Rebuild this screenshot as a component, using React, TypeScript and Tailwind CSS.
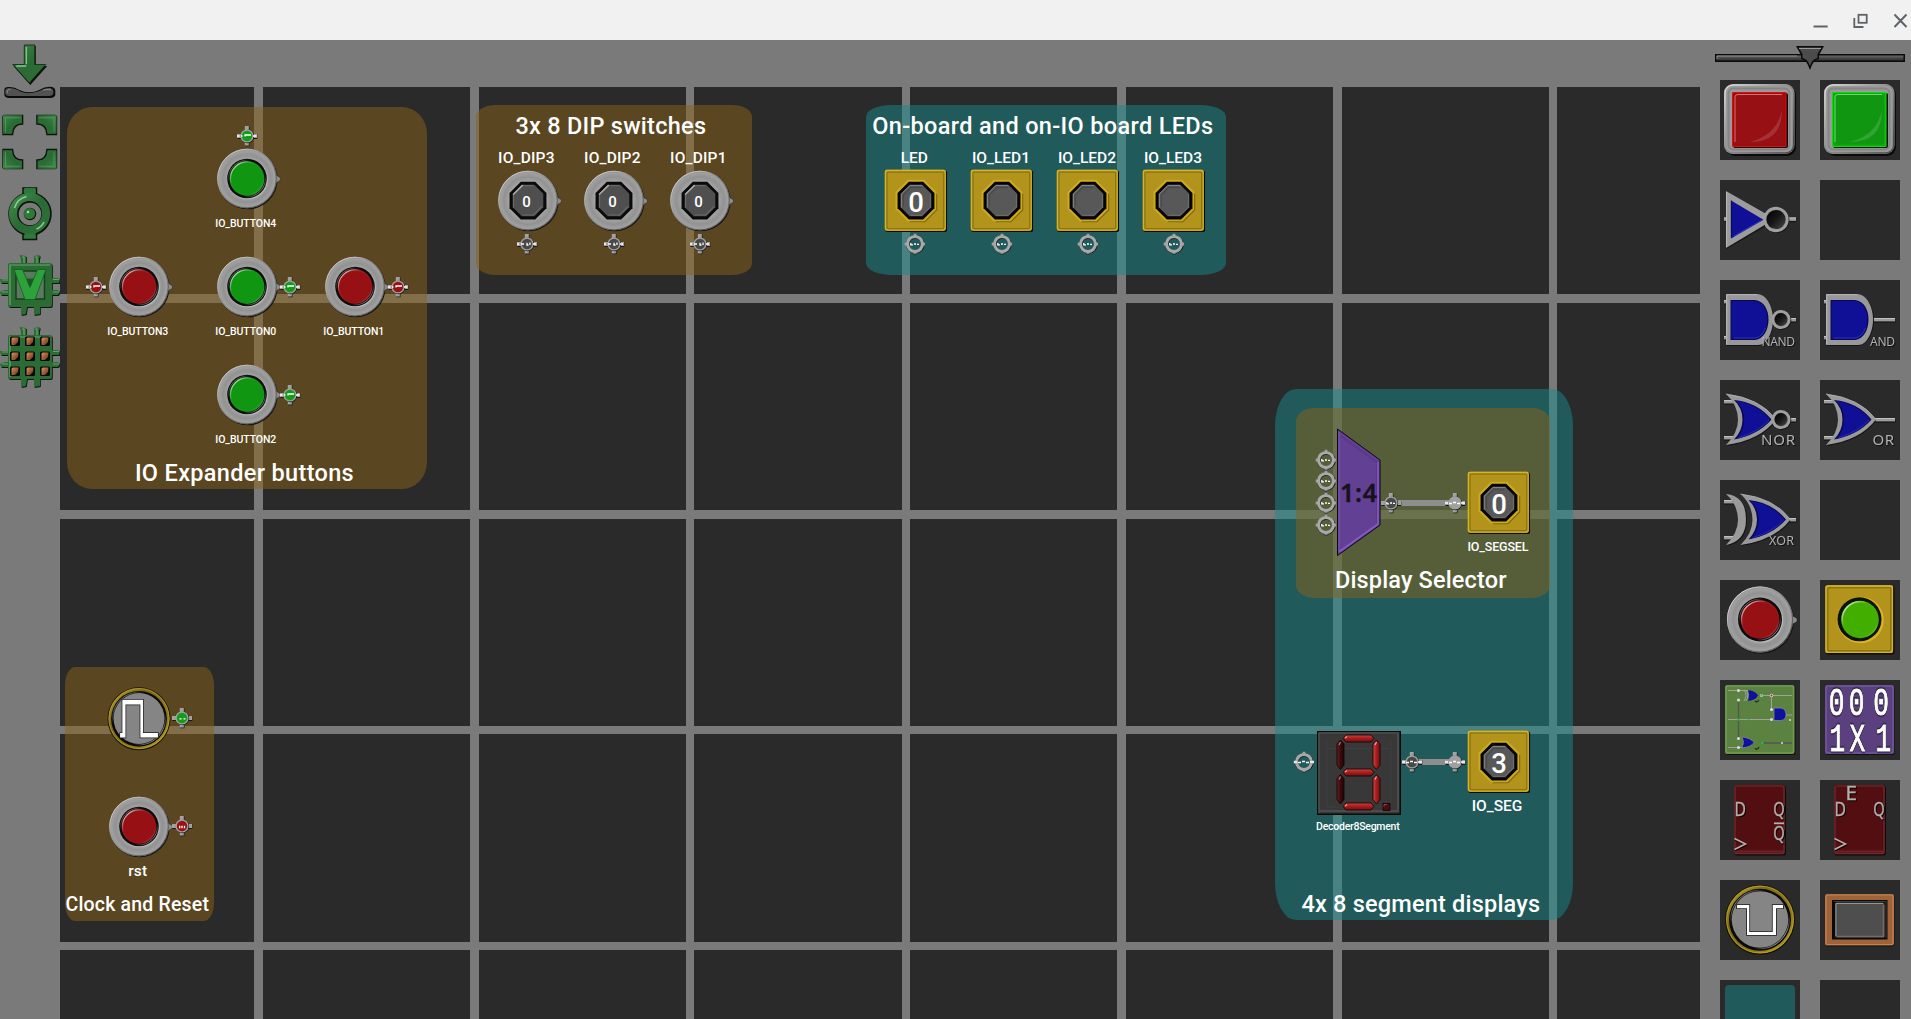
import React from "react";

/* ---------- Shared paint definitions ---------- */

function Defs() {
  return (
    <svg className="absolute h-0 w-0" aria-hidden="true">
      <defs>
        <radialGradient id="ring" cx="0.5" cy="0.5" r="0.5">
          <stop offset="0.6" stopColor="#a8a8a8" />
          <stop offset="0.8" stopColor="#929292" />
          <stop offset="0.93" stopColor="#a0a0a0" />
          <stop offset="1" stopColor="#8a8a8a" />
        </radialGradient>
        <linearGradient id="rim" x1="0" y1="0" x2="1" y2="1">
          <stop offset="0.1" stopColor="#e4e4e4" />
          <stop offset="0.45" stopColor="#8d8d8d" />
          <stop offset="0.9" stopColor="#3c3c3c" />
        </linearGradient>
        <linearGradient id="gloss" x1="0" y1="0" x2="1" y2="1">
          <stop offset="0.1" stopColor="#ffffff" stopOpacity="0.75" />
          <stop offset="0.35" stopColor="#ffffff" stopOpacity="0.05" />
          <stop offset="0.75" stopColor="#ffffff" stopOpacity="0" />
          <stop offset="1" stopColor="#ffffff" stopOpacity="0.3" />
        </linearGradient>
        <linearGradient id="glossEnd" x1="0" y1="0" x2="1" y2="1">
          <stop offset="0.1" stopColor="#ffffff" stopOpacity="0.7" />
          <stop offset="0.3" stopColor="#ffffff" stopOpacity="0" />
          <stop offset="0.7" stopColor="#ffffff" stopOpacity="0" />
          <stop offset="0.9" stopColor="#ffffff" stopOpacity="0.9" />
        </linearGradient>
        <linearGradient id="greenMetal" x1="0" y1="0" x2="1" y2="1">
          <stop offset="0" stopColor="#3f8a4a" />
          <stop offset="0.5" stopColor="#2a6a34" />
          <stop offset="1" stopColor="#2f7038" />
        </linearGradient>
        <linearGradient id="blackBall" x1="0" y1="0" x2="1" y2="1">
          <stop offset="0" stopColor="#000000" />
          <stop offset="0.5" stopColor="#181818" />
          <stop offset="1" stopColor="#4a4a4a" />
        </linearGradient>
        <linearGradient id="copper" x1="0" y1="0" x2="1" y2="1">
          <stop offset="0" stopColor="#d89468" />
          <stop offset="0.5" stopColor="#a05f36" />
          <stop offset="1" stopColor="#5a3018" />
        </linearGradient>
        <linearGradient id="slider" x1="0" y1="0" x2="0" y2="1">
          <stop offset="0" stopColor="#6c6c6c" />
          <stop offset="0.5" stopColor="#484848" />
          <stop offset="1" stopColor="#303030" />
        </linearGradient>
        <linearGradient id="redH" x1="0" y1="0" x2="0" y2="1">
          <stop offset="0" stopColor="#d04040" />
          <stop offset="0.5" stopColor="#a81c1c" />
          <stop offset="1" stopColor="#6e1010" />
        </linearGradient>
        <linearGradient id="redV" x1="0" y1="0" x2="1" y2="0">
          <stop offset="0" stopColor="#d44444" />
          <stop offset="0.5" stopColor="#a81c1c" />
          <stop offset="1" stopColor="#6e1010" />
        </linearGradient>
        <linearGradient id="offV" x1="0" y1="0" x2="1" y2="0">
          <stop offset="0" stopColor="#6e2024" />
          <stop offset="0.5" stopColor="#3a0a0c" />
          <stop offset="1" stopColor="#200506" />
        </linearGradient>
        <linearGradient id="gold" x1="0" y1="0" x2="1" y2="1">
          <stop offset="0" stopColor="#c8ac30" />
          <stop offset="0.3" stopColor="#7e6a14" />
          <stop offset="0.7" stopColor="#8e7818" />
          <stop offset="1" stopColor="#c4a428" />
        </linearGradient>
      </defs>
    </svg>
  );
}

const OCT = "M32 18.5H48L60.5 31V48L48 60.5H32L19.5 48V31Z";
const OCT_IN = "M33 22H47L57 32V47L47 57H33L23 47V32Z";

/* ---------- Component faces (80 x 80 artwork) ---------- */

function RoundBody() {
  return (
    <>
      <circle cx="40.8" cy="40.5" r="33.2" fill="#151515" />
      <path d="M71 35L77 38.500V41.500L71 45Z" fill="#8e8e8e" stroke="#222" strokeWidth="0.500" />
      <circle cx="40" cy="39.5" r="33" fill="url(#ring)" />
      <circle cx="40" cy="39.5" r="32.600" fill="none" stroke="url(#rim)" strokeWidth="1" />
    </>
  );
}

function PushButton({ color }: { color: string }) {
  return (
    <>
      <RoundBody />
      <circle cx="40.800" cy="40.300" r="22.300" fill="#bcbcbc" />
      <circle cx="40" cy="39.5" r="22" fill="#0c0c0c" />
      <circle cx="40" cy="39.5" r="20.4" fill="none" stroke="url(#glossEnd)" strokeWidth="0.7" />
      <circle cx="40" cy="39.5" r="19.300" fill={color} />
      <circle cx="40" cy="39.5" r="18.4" fill="none" stroke="url(#gloss)" strokeWidth="1.4" />
    </>
  );
}

function DipSwitch() {
  return (
    <>
      <RoundBody />
      <path d={OCT} fill="#0a0a0a" />
      <path d={OCT_IN} fill="#4f4f4f" />
      <path d="M23.5 33L34 22.5" stroke="#e8e8e8" strokeWidth="1.2" />
      <path d="M24 47V33L34 23H46" fill="none" stroke="#7a7a7a" strokeWidth="0.8" />
      <path d="M34 55.5H46L55.5 46" fill="none" stroke="#6a6a6a" strokeWidth="1.2" />
    </>
  );
}

function YellowPlate() {
  return (
    <>
      <rect x="6" y="6" width="68.500" height="68.500" rx="2" fill="#0d0d0d" />
      <rect x="5.300" y="5.300" width="67.800" height="67.800" rx="2" fill="#b2941c" />
      <rect x="6" y="6" width="66.400" height="66.400" rx="2" fill="none" stroke="#d8b42a" strokeWidth="1.3" />
      <rect x="7.800" y="7.800" width="63" height="63" rx="1.5" fill="none" stroke="#8f7512" strokeWidth="1.4" />
    </>
  );
}

function OctLed() {
  return (
    <>
      <YellowPlate />
      <path d={OCT} fill="none" stroke="#d9b21f" strokeWidth="4.5" opacity="0.75" />
      <path d="M33 63H50L63 50V32" fill="none" stroke="#82690c" strokeWidth="1.2" />
      <path d={OCT} fill="#050505" />
      <path d={OCT_IN} fill="#585858" />
      <path d="M23.7 47V32.3L33.3 22.7H47" fill="none" stroke="#8b8b8b" strokeWidth="1" />
      <path d="M26 46V33.5L34 25H46" fill="none" stroke="#4a4a4a" strokeWidth="1.4" />
      <path d="M34 56H46.5L56 46.5V33" fill="none" stroke="#727272" strokeWidth="1" />
    </>
  );
}

function RoundLed() {
  return (
    <>
      <YellowPlate />
      <circle cx="40.5" cy="40" r="23.3" fill="#dcb422" />
      <circle cx="39.5" cy="39.3" r="22" fill="#0d120a" />
      <circle cx="40" cy="39.5" r="18.8" fill="#42ae00" />
      <circle cx="40" cy="39.5" r="17.8" fill="none" stroke="url(#gloss)" strokeWidth="1.6" />
    </>
  );
}

function ClockFace({ wave }: { wave: string }) {
  return (
    <>
      <circle cx="40" cy="39.8" r="35" fill="#141204" />
      <circle cx="40" cy="39.5" r="34" fill="url(#gold)" />
      <circle cx="40" cy="39.5" r="33.4" fill="none" stroke="#c8ac30" strokeWidth="0.9" opacity="0.7" />
      <circle cx="40" cy="39.8" r="31" fill="#0a0a0a" />
      <circle cx="40" cy="39.5" r="29.3" fill="none" stroke="url(#glossEnd)" strokeWidth="0.9" />
      <circle cx="40" cy="39.5" r="28.3" fill="#858585" />
      <path d={wave} fill="#fff" stroke="#1c1c1c" strokeWidth="1.600" className="[paint-order:stroke]" />
    </>
  );
}

const WAVE_HIGH = "M19 55.500H21.500V18.500H44.500V55.500H61V60.500H41.500V24H25V60.500H19Z";
const WAVE_LOW = "M17 25H29.300V52H52.700V25H63V28.300H56V55H27V28.300H17Z";

function KeyCap({ face, light, dark }: { face: string; light: string; dark: string }) {
  return (
    <>
      <rect x="6" y="6" width="70" height="70" rx="9" fill="#0a0a0a" />
      <rect x="4" y="4" width="70.5" height="70" rx="9" fill="#9a9a9a" />
      <rect x="5" y="5" width="68.5" height="68" rx="8" fill="none" stroke="url(#rim)" strokeWidth="1.4" opacity="0.8" />
      <rect x="8.5" y="8.5" width="61" height="61" rx="5" fill="none" stroke="#858585" strokeWidth="2" />
      <rect x="13" y="13" width="55" height="55" rx="2" fill="#0c0c0c" />
      <rect x="12" y="12" width="54.5" height="55" rx="1" fill={light} />
      <rect x="13" y="13" width="52.5" height="53" rx="1" fill={dark} />
      <rect x="15.5" y="15" width="48.5" height="49.5" rx="2" fill={face} />
      <path d="M15 62V17Q15 14.5 18 14.5H62" fill="none" stroke="#fff" strokeWidth="0.9" opacity="0.5" />
      <path d="M62 30Q62 62 30 62Q57 55 62 30Z" fill="#fff" opacity="0.14" />
    </>
  );
}

/* ---------- Logic gates ---------- */

function Bubble({ x, r }: { x: number; r: number }) {
  return (
    <>
      <circle cx={x + 0.7} cy="40.3" r={r} fill="#151515" />
      <circle cx={x} cy="39.5" r={r} fill="#a0a0a0" />
      <circle cx={x} cy="39.5" r={r - 2.6} fill="#888" />
      <circle cx={x} cy="39.5" r={r - 3.1} fill="url(#blackBall)" />
    </>
  );
}

function Pin({ x, y, w }: { x: number; y: number; w: number }) {
  return (
    <>
      <rect x={x} y={y + 1} width={w + 0.4} height="3.6" fill="#151515" />
      <rect x={x} y={y} width={w} height="3.4" fill="#9c9c9c" />
      <rect x={x} y={y} width={w} height="1" fill="#c0c0c0" />
    </>
  );
}

function GateText({ children, x, w, size, y }: { children: string; x: number; w: number; size: number; y: number }) {
  return (
    <text
      x={x}
      y={y}
      fontSize={size}
      textLength={w}
      fill="#b0b0b0"
      fontFamily="Noto Sans, sans-serif"
      className="[filter:drop-shadow(1px_1px_0_#101010)]"
    >
      {children}
    </text>
  );
}

function NotGate() {
  return (
    <>
      <Pin x={4} y={37.5} w={4} />
      <Pin x={68} y={37.5} w={8} />
      <path d="M6.5 12V69L48 45V36Z" fill="#151515" />
      <path d="M6 11V68L48 43V35Z" fill="#9c9c9c" />
      <path d="M6.5 12V67" stroke="#b8b8b8" strokeWidth="1" />
      <path d="M11 20.5V58.5L43.5 39.7Z" fill="#101096" />
      <path d="M11.3 20.5V58" stroke="#06063c" strokeWidth="0.8" />
      <path d="M14 56L42 40" stroke="#3038c0" strokeWidth="1" />
      <Bubble x={56} r={12.7} />
    </>
  );
}

function AndBody() {
  return (
    <>
      <Pin x={4} y={20} w={4} />
      <Pin x={4} y={56} w={4} />
      <path d="M6.5 14.8H37C48 15.5 54 28 54 40C54 52 48 65 38 66H6.5Z" fill="#151515" />
      <path d="M6 14H37C47.500 14.500 53 28 53 39.500C53 51 47.500 65 38 65H6Z" fill="#989898" />
      <path d="M6.700 64V14.700H37" fill="none" stroke="#b8b8b8" strokeWidth="1" />
      <path d="M10.500 20H35C44 21 48.500 30 48.500 39.500C48.500 49 44 59 35 60H10.500Z" fill="#08084c" />
      <path d="M11.500 21H35C43 22 47.300 30 47.300 39.500C47.300 49 43 58.500 35 59H11.500Z" fill="#101096" />
      <path d="M14 58H35Q42 57 45.500 48" fill="none" stroke="#2830b4" strokeWidth="1" />
    </>
  );
}

function OrBody({ dx = 0 }: { dx?: number }) {
  return (
    <g transform={`translate(${dx} 0)`}>
      <path d="M7 15Q41 19 56 41Q41 61 7 66Q19 54 19 41Q19 26 7 15Z" fill="#151515" />
      <path d="M6 14Q40 18 56 39.500Q40 60.500 6 65Q18 53 18 40Q18 25 6 14Z" fill="#9a9a9a" />
      <path d="M6 14Q40 18 56 39.500" fill="none" stroke="#b4b4b4" strokeWidth="0.8" />
      <path d="M14 20Q37 22 51.500 39.500Q38 55 14 59.500Q22.500 51 22.500 39.500Q22.500 28 14 20Z" fill="#08084c" />
      <path d="M16 21Q37 23.500 50 39.500Q38 54 16.500 58.500Q24 51 24 39.500Q24 28 16 21Z" fill="#101096" />
      <path d="M19 57.500Q38 52 49 40" fill="none" stroke="#2830b4" strokeWidth="0.9" />
    </g>
  );
}

function OrPins() {
  return (
    <>
      <Pin x={4} y={20} w={11} />
      <Pin x={4} y={56} w={11} />
    </>
  );
}

function XorTail() {
  return (
    <>
      <path d="M7 15Q27 17 27 40Q27 62 7 66Q19 54 19 41Q19 26 7 15Z" fill="#151515" />
      <path d="M6 14Q26 16 26 39.500Q26 61 6 65Q18 53 18 40Q18 25 6 14Z" fill="#9a9a9a" />
    </>
  );
}

/* ---------- Palette tiles ---------- */

function MiniCircuit() {
  return (
    <>
      <rect x="6" y="6" width="69.500" height="69" rx="2" fill="#101010" />
      <rect x="5" y="5" width="69.500" height="69" rx="2" fill="#5b8240" />
      <rect x="6" y="6" width="67.500" height="67" rx="2" fill="none" stroke="#76a050" strokeWidth="1.500" opacity="0.8" />
      <path d="M8 10.500H28M42 15.500H72M8 39.500H52M8 67.500H26M51.500 15V30M66 35H72" stroke="#a0a0a0" strokeWidth="1" fill="none" />
      <path d="M18.500 20V59M40 63H72" stroke="#555" strokeWidth="1.300" />
      <path d="M28 10Q36 11 38 15.500Q36 20 28 21Q30 15 28 10Z" fill="#1010a0" />
      <path d="M24 10Q28 15 24 21M26 10Q30 15 26 21" stroke="#aaa" strokeWidth="0.900" fill="none" />
      <path d="M54 28H61Q66 29 66 34.500Q66 40 61 40.500H54Z" fill="#1010a0" stroke="#888" strokeWidth="0.800" />
      <path d="M22 57Q31 58 34 62.500Q31 67 22 68Q25 62 22 57Z" fill="#1010a0" stroke="#888" strokeWidth="0.700" />
      <g fill="#ddd">
        <circle cx="18.500" cy="10.500" r="1.500" /><circle cx="18.500" cy="20" r="1.500" />
        <circle cx="18.500" cy="58.500" r="1.500" /><circle cx="18.500" cy="67.500" r="1.500" />
        <circle cx="51.500" cy="29.500" r="1.500" /><circle cx="51.500" cy="39.500" r="1.500" />
        <circle cx="51.500" cy="15.500" r="1.800" /><circle cx="41.500" cy="15.500" r="1.500" />
        <circle cx="70" cy="40" r="1" /><circle cx="62" cy="63" r="1" />
      </g>
      <circle cx="51.500" cy="15.500" r="1" fill="#a02020" />
      <g fill="#20c030">
        <circle cx="18.500" cy="39.500" r="1.300" /><circle cx="28.500" cy="39.500" r="0.900" />
        <circle cx="41.500" cy="15.500" r="1" /><circle cx="42" cy="63" r="1.600" />
      </g>
      <path d="M35 21Q37 23 39 20M35 68Q37 71 39 67" stroke="#1c2a14" strokeWidth="1.200" fill="none" />
    </>
  );
}

const LUT_CHARS: [string, number, number][] = [
  ["0", 16.7, 35.3], ["0", 36.7, 35.3], ["0", 61, 35.3],
  ["1", 17.3, 71], ["X", 37.3, 71], ["1", 63.3, 71],
];

function LookupTable() {
  return (
    <>
      <rect x="6" y="6" width="68.500" height="69" rx="2" fill="#101010" />
      <rect x="5" y="5" width="69" height="69" rx="2" fill="#5b4080" />
      <rect x="6" y="6" width="67" height="67" rx="2" fill="none" stroke="#7a5ca4" strokeWidth="1.500" opacity="0.8" />
      {LUT_CHARS.map(([c, x, y], i) => (
        <text
          key={i}
          transform={`translate(${x} ${y}) scale(0.68 1)`}
          textAnchor="middle"
          fontFamily="Liberation Mono, monospace"
          fontSize="38.500"
          fill="#fff"
          stroke="#fff"
          strokeWidth="1"
          className="[filter:drop-shadow(0_0_1px_#000)_drop-shadow(0_0_0.5px_#000)]"
        >
          {c}
        </text>
      ))}
    </>
  );
}

function FlipText({ c, x, y }: { c: string; x: number; y: number }) {
  return (
    <text
      x={x}
      y={y}
      fontSize="19.500"
      fontFamily="Noto Sans, sans-serif"
      textLength="11.500"
      lengthAdjust="spacingAndGlyphs"
      fill="#b4b0b0"
      stroke="#b4b0b0"
      strokeWidth="0.300"
      className="[filter:drop-shadow(1px_1px_0_#0c0202)]"
    >
      {c}
    </text>
  );
}

function FlipFlop({ enable }: { enable?: boolean }) {
  return (
    <>
      <rect x="14.500" y="6" width="51.500" height="69.500" rx="2" fill="#0c0c0c" />
      <rect x="14" y="5" width="51" height="69.500" rx="2" fill="#520e10" />
      <rect x="15" y="6" width="49" height="67.500" rx="2" fill="none" stroke="#7c3434" strokeWidth="1.200" opacity="0.8" />
      <path d="M16 71.500H63" stroke="#7c3434" strokeWidth="2" opacity="0.6" />
      <FlipText c="D" x={14.5} y={36.3} />
      <FlipText c="Q" x={53.3} y={35.8} />
      {enable ? (
        <FlipText c="E" x={25.5} y={20} />
      ) : (
        <>
          <path d="M54 43.300H64" stroke="#b4b0b0" strokeWidth="1.800" />
          <FlipText c="Q" x={53.3} y={60} />
        </>
      )}
      <path d="M15 59.500L26 65L15 70.500" fill="none" stroke="#0c0202" strokeWidth="1.800" />
      <path d="M14.500 58.500L25.500 64L14.500 69.500" fill="none" stroke="#b4b0b0" strokeWidth="1.600" />
    </>
  );
}

function Screen() {
  return (
    <>
      <rect x="6" y="15" width="68.500" height="51.500" rx="2" fill="#101010" />
      <rect x="5" y="14" width="69" height="51.500" rx="2" fill="#a06338" />
      <rect x="6" y="15" width="67" height="49.500" rx="1.500" fill="none" stroke="#cc8a5c" strokeWidth="1.200" opacity="0.8" />
      <rect x="12" y="20" width="55.500" height="39.500" fill="#0a0a0a" />
      <path d="M14 21.500H66V58" fill="none" stroke="#555" strokeWidth="0.700" />
      <rect x="15" y="22.500" width="49.500" height="35" rx="1.500" fill="#4e4e4e" />
      <path d="M16 56V23.500H63" fill="none" stroke="#9a9a9a" strokeWidth="0.900" />
      <path d="M17 56.500H63.500V25" fill="none" stroke="#6e6e6e" strokeWidth="1.600" />
    </>
  );
}

function Tile({ children }: { children?: React.ReactNode }) {
  return (
    <div className="size-20 shrink-0 bg-[#2a2a2a]">
      <svg viewBox="0 0 80 80" className="block size-full">{children}</svg>
    </div>
  );
}

function Palette() {
  return (
    <aside className="flex w-[211px] shrink-0 flex-col overflow-hidden bg-[#7a7a7a] pl-[15px]">
      <svg viewBox="0 0 190 40" className="block h-10 w-[190px] shrink-0">
        <rect x="0" y="14" width="190" height="8" fill="#0a0a0a" />
        <rect x="1.500" y="15.500" width="187" height="5" fill="url(#slider)" />
        <path d="M2 19V16H82" stroke="#9a9a9a" strokeWidth="0.800" fill="none" />
        <path d="M81 6H109L104 15V19C98 21 98 23 95 30C92 23 92 21 86 19V15Z" fill="#0a0a0a" />
        <path d="M83.500 7.500H106.500L102.500 14V18C97 20 97 22 95 26C93 22 93 20 87.500 18V14Z" fill="#4c4c4c" />
        <path d="M84 8.500H106" stroke="#9a9a9a" strokeWidth="1" />
      </svg>
      <div className="grid grid-cols-[80px_80px] gap-5 pl-[5px]">
        <Tile><KeyCap face="#961014" light="#d01414" dark="#a80808" /></Tile>
        <Tile><KeyCap face="#109610" light="#12d812" dark="#05b005" /></Tile>
        <Tile><NotGate /></Tile>
        <Tile />
        <Tile><AndBody /><Pin x={69} y={38} w={7} /><Bubble x={61} r={9.6} /><GateText x={41.5} w={33.5} size={12} y={65.5}>NAND</GateText></Tile>
        <Tile><Pin x={53} y={38} w={22} /><AndBody /><GateText x={50} w={25} size={12} y={65.5}>AND</GateText></Tile>
        <Tile><OrPins /><OrBody /><Pin x={69} y={38} w={7} /><Bubble x={61} r={9.6} /><GateText x={41} w={34} size={15} y={65}>NOR</GateText></Tile>
        <Tile><OrPins /><Pin x={53} y={38} w={22} /><OrBody /><GateText x={52.5} w={21.5} size={15} y={65}>OR</GateText></Tile>
        <Tile><OrPins /><XorTail /><Pin x={68} y={38} w={8} /><OrBody dx={14.5} /><GateText x={49} w={25} size={12.5} y={65}>XOR</GateText></Tile>
        <Tile />
        <Tile><PushButton color="#961014" /></Tile>
        <Tile><RoundLed /></Tile>
        <Tile><MiniCircuit /></Tile>
        <Tile><LookupTable /></Tile>
        <Tile><FlipFlop /></Tile>
        <Tile><FlipFlop enable /></Tile>
        <Tile><ClockFace wave={WAVE_LOW} /></Tile>
        <Tile><Screen /></Tile>
        <Tile><rect x="5" y="5" width="70" height="70" rx="4" fill="#205a5a" /></Tile>
        <Tile />
      </div>
    </aside>
  );
}

/* ---------- Left toolbar ---------- */

const CHIP =
  "M8 17Q8 15 10 15H21V11L19.500 7L26 8V15H34V8L39 7L40 8L39 11V15H50Q52 15 52 17V30H58L60 31L59 35H52V42H58L60 44L58 47H52V57Q52 59 50 59H40V66L34 67V59H27L26 66L21 67V59H10Q8 59 8 57V47H1L0 44L5 42H8V35H1L0 31H8Z";

function ChipBase() {
  return (
    <>
      <path d={CHIP} transform="translate(0.800 1)" fill="#0c160c" />
      <path d={CHIP} fill="#2b6c35" />
      <path d="M10 57V17H50M22 9L24 9V15M35 9L37 9V15M2 32H8M2 44H8M53 31.500H59M53 44H59" stroke="#74b67c" strokeWidth="1.200" fill="none" opacity="0.8" />
    </>
  );
}

function ToolIcons() {
  return (
    <nav className="flex w-[60px] shrink-0 flex-col bg-[#7a7a7a]">
      <svg viewBox="0.700 0 60 60" className="block h-[60px] w-[60px]">
        <path d="M26 6H36.500V26H48L31 45L14 26H26Z" fill="#0c140c" />
        <path d="M25 5H35.500V24.500H46.500L30 43L13.500 24.500H25Z" fill="url(#greenMetal)" stroke="#10240f" strokeWidth="0.800" />
        <path d="M27 24V7M17 26H27" stroke="#86c88c" strokeWidth="1.300" />
        <path d="M5 50Q5 47 9 47Q15 46.500 20 50Q30 54.500 40 50Q46 46 53 47Q56 48 56 51V55Q55 58 51 58H10Q5 58 5 54Z" fill="#0a0a0a" />
        <path d="M6 51Q6 48 10 48Q16 48 21 51.500Q30 55 40 51Q46 47.500 51 48Q54 49 54 51V54Q53 56 50 56H10Q6 56 6 53Z" fill="#525252" />
        <path d="M8 53Q7 49.500 11 49.500M44 50Q50 48.500 52 50" stroke="#909090" strokeWidth="1" fill="none" />
      </svg>
      <svg viewBox="0.500 -0.300 60 72" className="block h-[72px] w-[60px]">
        {["", "translate(60.500 0) scale(-1 1)", "translate(0 83.500) scale(1 -1)", "translate(60.500 83.500) scale(-1 -1)"].map((t) => (
          <g key={t} transform={t}>
            <path d="M3.500 33.500V16Q4 15 5 15H22.500V23Q13 23 12.500 33.500Z" transform="translate(0.300 0.500)" stroke="#0c140c" strokeWidth="2" fill="none" />
            <path d="M3.500 33.500V16Q4 15 5 15H22.500V23Q13 23 12.500 33.500Z" fill="url(#greenMetal)" />
            <path d="M6 32V17.500H21" stroke="#5fa868" strokeWidth="1" fill="none" opacity="0.6" />
          </g>
        ))}
      </svg>
      <svg viewBox="0.500 0 60 72" className="block h-[72px] w-[60px]">
        <g stroke="#0c140c" strokeWidth="1.500">
          <path d="M23.500 16H37V23H23.500ZM23.500 60H37V67.500H23.500Z" fill="#2f7a3a" />
          <circle cx="30.500" cy="42" r="16.500" fill="none" strokeWidth="10.500" />
          <path d="M25 16H36V24H25ZM25 60H36V66H25Z" fill="#2f7a3a" stroke="none" />
          <circle cx="30" cy="41.500" r="16.500" fill="none" stroke="url(#greenMetal)" strokeWidth="8.200" />
        </g>
        <path d="M15 36A16.500 16.500 0 0 1 27 24.500M37 57Q42 55 44.500 50" stroke="#8ccc92" strokeWidth="1.600" fill="none" />
        <circle cx="30.500" cy="42" r="6.200" fill="#0c140c" />
        <circle cx="30" cy="41.500" r="5.600" fill="#2d7a38" />
        <circle cx="28.500" cy="40" r="1.300" fill="#9fdca4" />
      </svg>
      <svg viewBox="0 -4 60 72" className="block h-[72px] w-[60px]">
        <ChipBase />
        <rect x="16" y="23" width="28.500" height="28" fill="#5d7862" stroke="#14401a" strokeWidth="1.500" />
        <path d="M26 30H35.500V39H26Z" fill="#1f5226" stroke="#3c8245" strokeWidth="1.500" />
        <path d="M14 21.500H22.500L30 39.500L37.500 21.500H46L35 51.500H25Z" fill="#2ca23a" stroke="#12541a" strokeWidth="0.700" />
      </svg>
      <svg viewBox="0 -4 60 72" className="block h-[72px] w-[60px]">
        <ChipBase />
        {[15, 30, 45].map((x) =>
          [21, 36, 51].map((y) => (
            <g key={`${x}-${y}`}>
              <rect x={x - 5} y={y - 4.5} width="10" height="9.500" rx="1.500" fill="#080808" />
              <path d={`M${x - 3.5} ${y - 2}Q${x - 3.5} ${y - 3.5} ${x - 2} ${y - 3.5}H${x + 3.5}L${x + 3} ${y + 1}L${x} ${y + 4}H${x - 3.5}Z`} fill="url(#copper)" />
            </g>
          )),
        )}
      </svg>
    </nav>
  );
}

/* ---------- Workspace ---------- */

function Grid() {
  return (
    <div className="grid h-[932px] w-[1640px] grid-cols-[194px_9px_207px_9px_207px_8px_208px_8px_207px_9px_207px_9px_207px_8px_143px] grid-rows-[207px_9px_207px_9px_207px_8px_208px_8px_69px]">
      {Array.from({ length: 135 }, (_, i) => (
        <div key={i} className={(i % 15) % 2 === 0 && Math.floor(i / 15) % 2 === 0 ? "bg-[#2a2a2a]" : "bg-[#7a7a7a]"} />
      ))}
    </div>
  );
}

function Group({ x, y, w, h, teal }: { x: number; y: number; w: number; h: number; teal?: boolean }) {
  return (
    <div
      className={teal ? "absolute rounded-[7%] bg-[rgb(22_138_138/0.5)]" : "absolute rounded-[7%] bg-[rgb(138_98_22/0.5)]"}
      style={{ left: x, top: y, width: w, height: h }}
    />
  );
}

/* Roboto's baseline sits at 0.842em inside a line box of height 1em. */
function Label({ t, x, y, size, ls = 0 }: { t: string; x: number; y: number; size: number; ls?: number }) {
  return (
    <div
      className="absolute -translate-x-1/2 leading-none font-medium whitespace-nowrap text-white"
      style={{ left: x + ls / 2, top: y - size * 0.842, fontSize: size, letterSpacing: ls }}
    >
      {t}
    </div>
  );
}

/* A placed part: the 80-unit artwork drawn at 72 px around its centre. */
function Part({ x, y, children }: { x: number; y: number; children: React.ReactNode }) {
  return (
    <svg viewBox="0 0 80 80" className="absolute size-[72px]" style={{ left: x - 36, top: y - 35.5 }}>
      {children}
    </svg>
  );
}

const PORT_MARKS: Record<string, string> = {
  button: "M1 11H3.500M5 11H6.500M9 11.500V10H15M17 11H20.500",
  dip: "M1 11H3M5 11H8M11 9.800V12H12.500M14 9.500V12M17 11H20",
  clk: "M8.500 11.800H10.500M12.500 11.800H14.500",
  rst: "M8.700 10.800V13.200M11 10.800V13.200M13.500 10.800V13.200",
  led: "M6.800 10V11.800H9M10 11H12M13 11.300H15",
  wide: "M1 11H4M5 11.500H8M9 10.500H12M13 11.500H16M17 11H21",
};

function Port({ x, y, fill, mark }: { x: number; y: number; fill: string; mark: string }) {
  return (
    <svg viewBox="0 0 22 22" className="absolute size-[22px]" style={{ left: x - 11.3, top: y - 11 }}>
      <path d="M9.200 1.500H13.500V21.300H9.200ZM1.500 9.200H21.300V14H1.500Z" fill="#181818" />
      <path d="M8.800 1H12.800V20.500H8.800ZM1 9H21V13H1Z" fill="#a2a2a2" />
      <circle cx="11.500" cy="11.500" r="6.700" fill="#181818" />
      <circle cx="11" cy="11" r="6.600" fill="#a0a0a0" />
      <circle cx="11" cy="11" r="5.200" fill={fill} />
      <path d={PORT_MARKS[mark]} stroke="#fff" strokeWidth="1.300" fill="none" />
    </svg>
  );
}

function Socket({ x, y, mark = "led" }: { x: number; y: number; mark?: string }) {
  return (
    <svg viewBox="0 0 22 22" className="absolute size-[22px]" style={{ left: x - 11.3, top: y - 11 }}>
      <path d="M9.500 1H12.500V5H9.500ZM9.500 18H12.500V21.500H9.500Z" fill="#202020" />
      <circle cx="11.400" cy="11.500" r="7.600" fill="none" stroke="#181818" strokeWidth="3.500" />
      <path d="M9.500 0.700H12.500V4H9.500ZM9.500 18H12.500V20.800H9.500ZM0.700 9.500H4V12.500H0.700ZM18 9.500H21V12.500H18Z" fill="#a0a0a0" />
      <circle cx="11" cy="11" r="7.500" fill="none" stroke="#a8a8a8" strokeWidth="3.100" />
      <path d={PORT_MARKS[mark]} stroke="#fff" strokeWidth="1.300" fill="none" />
    </svg>
  );
}

function Wire({ x, y, w }: { x: number; y: number; w: number }) {
  return <div className="absolute h-1.5 bg-[#8e8e8e]" style={{ left: x, top: y, width: w }} />;
}

function Mux() {
  return (
    <svg viewBox="0 0 44 128" className="absolute top-[428px] left-[1337px] h-32 w-11">
      <path d="M0.500 1L43 32V97L0.500 127.500Z" fill="#624094" stroke="#0c0814" strokeWidth="1" />
      <path d="M2 4V124" stroke="#8462b4" strokeWidth="1.200" opacity="0.600" />
      <path d="M4 8L40 34V94" fill="none" stroke="#553384" strokeWidth="2" opacity="0.600" />
      <path d="M2.500 123.500L41 96V34" fill="none" stroke="#8858c8" strokeWidth="1.600" />
      <text x="3" y="73.700" fontSize="25" fontFamily="Noto Sans, sans-serif" fontWeight="600" textLength="37" fill="#17131c" stroke="#17131c" strokeWidth="0.400">1:4</text>
    </svg>
  );
}

function SevenSegment() {
  const h = (y: number) => `M26 ${y + 3.5}L29 ${y}H54L57 ${y + 3.5}L54 ${y + 7}H29Z`;
  const v = (x: number, y: number) => `M${x + 3.5} ${y}L${x + 7} ${y + 4}V${y + 25}L${x + 3.5} ${y + 29.5}L${x} ${y + 25}V${y + 4}Z`;
  return (
    <svg viewBox="0 0 84 84" className="absolute top-[731px] left-[1317px] size-[84px]">
      <rect width="84" height="84" fill="#0a0a0a" />
      <rect x="1" y="1" width="81.500" height="81.500" fill="#383838" />
      <path d="M2 82V2H82" fill="none" stroke="#555" strokeWidth="1" />
      <path d="M3 80H81V3" fill="none" stroke="#4c4c4c" strokeWidth="2" />
      <path d="M12 17.500H72M10 10V76H74V10" fill="none" stroke="#444" strokeWidth="0.700" />
      <g stroke="#100404" strokeWidth="0.800">
        <path d={h(4)} fill="url(#redH)" />
        <path d={h(38)} fill="url(#redH)" />
        <path d={h(72)} fill="url(#redH)" />
        <path d={v(20, 9)} fill="url(#offV)" />
        <path d={v(20, 43.5)} fill="url(#offV)" />
        <path d={v(56, 9)} fill="url(#redV)" />
        <path d={v(56, 43.5)} fill="url(#redV)" />
        <rect x="66" y="72.500" width="7" height="7" fill="#4a0c10" />
      </g>
      <path d="M67 76V73.500H70" stroke="#a05050" strokeWidth="0.800" fill="none" />
      <g stroke="#f0a0a0" strokeWidth="1.200">
        <path d="M28 7L30 5.500M28 41L30 39.500M28 75L30 73.500M58 14L59.500 11M58 48.500L59.500 45.500" />
        <path d="M22 14L23.500 11M22 48.500L23.500 45.500" opacity="0.700" />
      </g>
    </svg>
  );
}

const RED = "#961014";
const GREEN = "#109610";

const BUTTONS: [string, number, number, string][] = [
  ["IO_BUTTON4", 246.7, 178.7, GREEN],
  ["IO_BUTTON3", 138.7, 286.7, RED],
  ["IO_BUTTON0", 246.7, 286.7, GREEN],
  ["IO_BUTTON1", 354.7, 286.7, RED],
  ["IO_BUTTON2", 246.7, 394.7, GREEN],
];

const BUTTON_PORTS: [number, number, string][] = [
  [247.3, 136.3, "#129c18"],
  [96.3, 287.3, "#9c1014"],
  [290.3, 287.3, "#129c18"],
  [398.3, 287.3, "#9c1014"],
  [290.3, 395.3, "#129c18"],
];

const LEDS: [string, number, string][] = [
  ["LED", 916, "0"],
  ["IO_LED1", 1002.7, ""],
  ["IO_LED2", 1088.7, ""],
  ["IO_LED3", 1174.7, ""],
];

/* Item coordinates are measured from the window's top-left corner. */
function Items() {
  return (
    <div className="absolute -top-[87px] -left-[60px] h-[1019px] w-[1700px]">
      <Group x={67} y={107} w={360} h={382} />
      <Group x={476} y={105} w={276} h={170} />
      <Group x={866} y={105} w={360} h={170} teal />
      <Group x={1275} y={389} w={298} h={531} teal />
      <Group x={1296} y={407.5} w={254} h={190.5} />
      <Group x={65} y={667} w={149} h={254} />

      {BUTTONS.map(([name, x, y, color]) => (
        <React.Fragment key={name}>
          <Part x={x} y={y}><PushButton color={color} /></Part>
          <Label t={name} x={x - 0.9} y={y + 49.2} size={10.5} ls={-0.08} />
        </React.Fragment>
      ))}
      {BUTTON_PORTS.map(([x, y, c]) => (
        <Port key={`${x}-${y}`} x={x} y={y} fill={c} mark="button" />
      ))}
      <Label t="IO Expander buttons" x={244.3} y={481.6} size={23.5} ls={0.33} />

      {["IO_DIP3", "IO_DIP2", "IO_DIP1"].map((name, i) => (
        <React.Fragment key={name}>
          <Label t={name} x={526.3 + i * 86} y={164.4} size={15.5} ls={0.2} />
          <Part x={527.7 + i * 86} y={200.7}><DipSwitch /></Part>
          <Label t="0" x={526.5 + i * 86} y={207.5} size={15} />
          <Port x={527.3 + i * 86.5} y={244.3} fill="#484848" mark="dip" />
        </React.Fragment>
      ))}
      <Label t="3x 8 DIP switches" x={610.7} y={134.6} size={23.5} ls={0.26} />

      {LEDS.map(([name, x, value]) => (
        <React.Fragment key={name}>
          <Label t={name} x={x - 1.7} y={164.4} size={15.5} />
          <Part x={x - 0.3} y={200.7}><OctLed /></Part>
          {value && <Label t={value} x={x} y={211.7} size={27.5} />}
          <Socket x={x - 0.3} y={244.3} />
        </React.Fragment>
      ))}
      <Label t="On-board and on-IO board LEDs" x={1042.7} y={134.6} size={23.5} ls={0.34} />

      <Mux />
      {[460, 481.3, 503.3, 524.8].map((y) => <Socket key={y} x={1326.3} y={y} />)}
      <Wire x={1392} y={500} w={63} />
      <Port x={1391.5} y={503.3} fill="#484848" mark="led" />
      <Port x={1455.3} y={503.3} fill="#a0a0a0" mark="wide" />
      <Part x={1498.8} y={502.7}><OctLed /></Part>
      <Label t="0" x={1499} y={513.7} size={27.5} />
      <Label t="IO_SEGSEL" x={1498} y={551.6} size={12.5} ls={-0.15} />
      <Label t="Display Selector" x={1420.7} y={589.2} size={23.5} ls={0.15} />

      <SevenSegment />
      <Socket x={1304.3} y={762} mark="wide" />
      <Wire x={1412} y={759} w={43} />
      <Port x={1412.3} y={762.3} fill="#484848" mark="wide" />
      <Port x={1455.3} y={762.3} fill="#a0a0a0" mark="wide" />
      <Part x={1498.8} y={761.7}><OctLed /></Part>
      <Label t="3" x={1499} y={772.7} size={27.5} />
      <Label t="IO_SEG" x={1497} y={812.2} size={15.5} />
      <Label t="Decoder8Segment" x={1357.9} y={830.8} size={10.5} ls={-0.26} />
      <Label t="4x 8 segment displays" x={1420.8} y={912.9} size={23.5} ls={0.2} />

      <Part x={139} y={718.7}><ClockFace wave={WAVE_HIGH} /></Part>
      <Port x={182.3} y={718.3} fill="#129c18" mark="clk" />
      <Part x={138.7} y={826.7}><PushButton color={RED} /></Part>
      <Port x={182.3} y={826.3} fill="#9c1014" mark="rst" />
      <Label t="rst" x={137.7} y={876.9} size={15.5} ls={0.2} />
      <Label t="Clock and Reset" x={137.2} y={911} size={19.5} ls={0.18} />
    </div>
  );
}

function TitleBar() {
  return (
    <header className="flex h-10 shrink-0 items-center justify-end bg-[#f1f1f1] pr-[3px]">
      <svg viewBox="0 0 96 40" className="block h-10 w-24" fill="none" stroke="#5f6368">
        <path d="M1.500 26.500H15.700" strokeWidth="2" />
        <rect x="46.500" y="14.800" width="8.200" height="8" strokeWidth="1.800" />
        <path d="M42.300 18V27H51.500" strokeWidth="1.800" />
        <path d="M82.500 14.500L94.500 27M94.500 14.500L82.500 27" strokeWidth="2" />
      </svg>
    </header>
  );
}

export default function App() {
  return (
    <div className="flex h-screen w-full flex-col overflow-hidden bg-[#7a7a7a] font-['Roboto',sans-serif]">
      <Defs />
      <TitleBar />
      <div className="flex min-h-0 flex-1">
        <ToolIcons />
        <main className="w-[1640px] shrink-0 pt-[47px]">
          <div className="relative">
            <Grid />
            <Items />
          </div>
        </main>
        <Palette />
      </div>
    </div>
  );
}
